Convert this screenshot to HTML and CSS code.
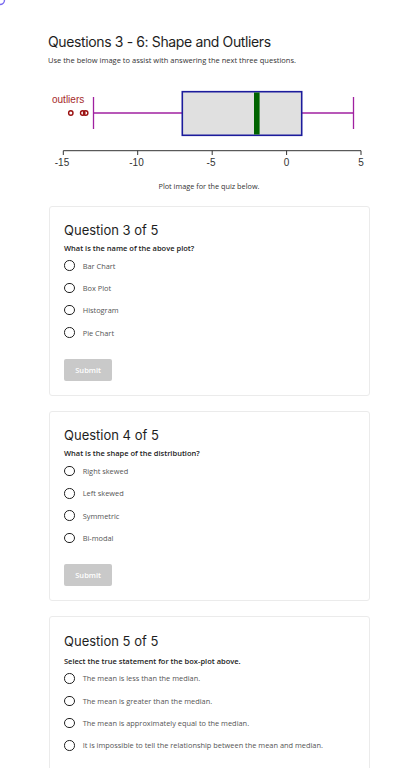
FILE: index.html
```html
<!DOCTYPE html>
<html lang="en">
<head>
<meta charset="utf-8">
<title>Questions 3 - 6: Shape and Outliers</title>
<link rel="stylesheet" href="styles.css">
</head>
<body>
<svg class="corner" width="6" height="6" viewBox="0 0 6 6"><path d="M0 4.5 A4.5 4.5 0 0 0 4.5 0" fill="none" stroke="#7b6cf0" stroke-width="1.4"/></svg>
<main class="page">
  <h1 class="title">Questions 3 - 6: Shape and Outliers</h1>
  <p class="intro">Use the below image to assist with answering the next three questions.</p>

  <figure class="plot">
    <svg class="plot-svg" width="322" height="92" viewBox="0 0 322 92">
      <text x="4" y="18" class="outlier-label">outliers</text>
      <g fill="none" stroke="#9a1010" stroke-width="1.4">
        <circle cx="22.8" cy="28" r="2.2"/>
        <circle cx="34.7" cy="28" r="2.2"/>
        <circle cx="37.7" cy="28" r="2.2"/>
      </g>
      <g stroke="#a020a0" stroke-width="1.3">
        <line x1="45.5" y1="28" x2="134.3" y2="28"/>
        <line x1="45.5" y1="12" x2="45.5" y2="44"/>
        <line x1="253.7" y1="28" x2="305.5" y2="28"/>
        <line x1="305.5" y1="12" x2="305.5" y2="44"/>
      </g>
      <rect x="134.3" y="6.7" width="119.4" height="43.6" fill="#e0e0e0" stroke="#1c1c9c" stroke-width="1.6"/>
      <rect x="206" y="7.5" width="5.6" height="42" fill="#006400"/>
      <g stroke="#333" stroke-width="1">
        <line x1="15.3" y1="65.7" x2="313" y2="65.7"/>
        <line x1="15.3" y1="65.7" x2="15.3" y2="70"/>
        <line x1="89.7" y1="65.7" x2="89.7" y2="70"/>
        <line x1="164.2" y1="65.7" x2="164.2" y2="70"/>
        <line x1="238.6" y1="65.7" x2="238.6" y2="70"/>
        <line x1="313" y1="65.7" x2="313" y2="70"/>
      </g>
      <g class="tick-label" text-anchor="middle">
        <text x="14" y="81">-15</text>
        <text x="88.5" y="81">-10</text>
        <text x="163" y="81">-5</text>
        <text x="238.6" y="81">0</text>
        <text x="313" y="81">5</text>
      </g>
    </svg>
    <figcaption class="caption">Plot image for the quiz below.</figcaption>
  </figure>

  <section class="card">
    <h2 class="card-title">Question 3 of 5</h2>
    <p class="question">What is the name of the above plot?</p>
    <ul class="options">
      <li class="option"><span class="radio"></span><span class="label">Bar Chart</span></li>
      <li class="option"><span class="radio"></span><span class="label">Box Plot</span></li>
      <li class="option"><span class="radio"></span><span class="label">Histogram</span></li>
      <li class="option"><span class="radio"></span><span class="label">Pie Chart</span></li>
    </ul>
    <button class="submit" type="button">Submit</button>
  </section>

  <section class="card">
    <h2 class="card-title">Question 4 of 5</h2>
    <p class="question">What is the shape of the distribution?</p>
    <ul class="options">
      <li class="option"><span class="radio"></span><span class="label">Right skewed</span></li>
      <li class="option"><span class="radio"></span><span class="label">Left skewed</span></li>
      <li class="option"><span class="radio"></span><span class="label">Symmetric</span></li>
      <li class="option"><span class="radio"></span><span class="label">Bi-modal</span></li>
    </ul>
    <button class="submit" type="button">Submit</button>
  </section>

  <section class="card card-last">
    <h2 class="card-title">Question 5 of 5</h2>
    <p class="question">Select the true statement for the box-plot above.</p>
    <ul class="options">
      <li class="option"><span class="radio"></span><span class="label">The mean is less than the median.</span></li>
      <li class="option"><span class="radio"></span><span class="label">The mean is greater than the median.</span></li>
      <li class="option"><span class="radio"></span><span class="label">The mean is approximately equal to the median.</span></li>
      <li class="option"><span class="radio"></span><span class="label">It is impossible to tell the relationship between the mean and median.</span></li>
    </ul>
    <button class="submit" type="button">Submit</button>
  </section>
</main>
</body>
</html>
```
FILE: styles.css
```css
* { box-sizing: border-box; }

html, body {
  margin: 0;
  padding: 0;
  background: #ffffff;
}

body {
  font-family: "Open Sans", "Noto Sans", sans-serif;
  color: #333;
}

.corner {
  position: absolute;
  left: 0;
  top: 0;
}

.page {
  width: 322px;
  margin: 0 0 0 48px;
  padding-top: 32.8px;
  display: flex;
  flex-direction: column;
}

.title {
  margin: 0;
  font-family: Inter, "Liberation Sans", sans-serif;
  font-weight: 400;
  font-size: 14px;
  line-height: 18px;
  letter-spacing: -0.37px;
  color: #1e1e1e;
}

.intro {
  margin: 4px 0 0;
  font-size: 7.5px;
  line-height: 10px;
  color: #333;
}

.plot {
  margin: 20.2px 0 0;
  padding: 0;
  display: flex;
  flex-direction: column;
}

.plot-svg {
  display: block;
}

.outlier-label {
  font-family: "Liberation Sans", Arial, sans-serif;
  font-size: 10px;
  fill: #a52a2a;
}

.tick-label text {
  font-family: "Liberation Sans", Arial, sans-serif;
  font-size: 10px;
  fill: #333;
}

.caption {
  margin-top: 4px;
  text-align: center;
  font-size: 7.3px;
  line-height: 10px;
  color: #333;
}

.card {
  margin-top: 15px;
  width: 321px;
  margin-left: 1px;
  border: 1px solid #ebebeb;
  border-radius: 3px;
  padding: 15px 14px 14px;
  display: flex;
  flex-direction: column;
  align-items: flex-start;
}

.plot + .card {
  margin-top: 14.7px;
}

.card-last {
  padding-top: 16px;
}

.card-title {
  margin: 0;
  font-family: Inter, "Liberation Sans", sans-serif;
  font-weight: 400;
  font-size: 13px;
  line-height: 16px;
  color: #1e1e1e;
}

.question {
  margin: 5.4px 0 0;
  font-size: 7.5px;
  line-height: 10px;
  font-weight: 600;
  color: #222;
}

.card-last .question {
  margin-top: 6.4px;
}

.options {
  list-style: none;
  margin: 1.4px 0 0;
  padding: 0;
  display: flex;
  flex-direction: column;
}

.option {
  height: 22.33px;
  display: flex;
  align-items: center;
  gap: 8px;
}

.radio {
  width: 10.4px;
  height: 10.4px;
  margin-left: 0.3px;
  border: 1.3px solid #222;
  border-radius: 50%;
  flex: none;
}

.label {
  font-size: 7.4px;
  line-height: 10px;
  color: #555;
}

.submit {
  margin-top: 15px;
  width: 48.3px;
  height: 22.3px;
  border: none;
  border-radius: 2px;
  background: #c9c9c9;
  color: #ffffff;
  font-family: "Open Sans", "Noto Sans", sans-serif;
  font-size: 7.5px;
  font-weight: 600;
  padding: 0;
}

.card-last .submit {
  margin-top: 26px;
}
```
